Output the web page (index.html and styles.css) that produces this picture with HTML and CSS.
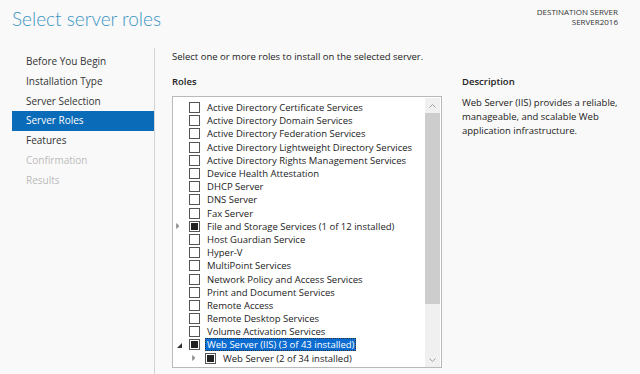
FILE: index.html
```html
<!DOCTYPE html>
<html lang="en">
<head>
  <meta charset="UTF-8" />
  <title>Add Roles and Features Wizard</title>
  <link rel="stylesheet" href="styles.css">
</head>
<body>

<header class="top">
  <h1>Select server roles</h1>
  <div class="dest">
    <div>DESTINATION SERVER</div>
    <div>SERVER2016</div>
  </div>
</header>

<div class="main">
  <nav class="steps">
    <a>Before You Begin</a>
    <a>Installation Type</a>
    <a>Server Selection</a>
    <a class="active">Server Roles</a>
    <a>Features</a>
    <a class="disabled">Confirmation</a>
    <a class="disabled">Results</a>
  </nav>

  <section class="content">
    <p class="intro">Select one or more roles to install on the selected server.</p>
    <div class="cols">
      <div>
        <h3>Roles</h3>
        <div class="listbox">
          <ul class="tree">
            <li><span class="exp"></span><span class="cb"></span><span class="lbl">Active Directory Certificate Services</span></li>
            <li><span class="exp"></span><span class="cb"></span><span class="lbl">Active Directory Domain Services</span></li>
            <li><span class="exp"></span><span class="cb"></span><span class="lbl">Active Directory Federation Services</span></li>
            <li><span class="exp"></span><span class="cb"></span><span class="lbl">Active Directory Lightweight Directory Services</span></li>
            <li><span class="exp"></span><span class="cb"></span><span class="lbl">Active Directory Rights Management Services</span></li>
            <li><span class="exp"></span><span class="cb"></span><span class="lbl">Device Health Attestation</span></li>
            <li><span class="exp"></span><span class="cb"></span><span class="lbl">DHCP Server</span></li>
            <li><span class="exp"></span><span class="cb"></span><span class="lbl">DNS Server</span></li>
            <li><span class="exp"></span><span class="cb"></span><span class="lbl">Fax Server</span></li>
            <li><span class="exp collapsed"></span><span class="cb partial"></span><span class="lbl">File and Storage Services (1 of 12 installed)</span></li>
            <li><span class="exp"></span><span class="cb"></span><span class="lbl">Host Guardian Service</span></li>
            <li><span class="exp"></span><span class="cb"></span><span class="lbl">Hyper-V</span></li>
            <li><span class="exp"></span><span class="cb"></span><span class="lbl">MultiPoint Services</span></li>
            <li><span class="exp"></span><span class="cb"></span><span class="lbl">Network Policy and Access Services</span></li>
            <li><span class="exp"></span><span class="cb"></span><span class="lbl">Print and Document Services</span></li>
            <li><span class="exp"></span><span class="cb"></span><span class="lbl">Remote Access</span></li>
            <li><span class="exp"></span><span class="cb"></span><span class="lbl">Remote Desktop Services</span></li>
            <li><span class="exp"></span><span class="cb"></span><span class="lbl">Volume Activation Services</span></li>
            <li><span class="exp expanded"></span><span class="cb partial"></span><span class="lbl selected">Web Server (IIS) (3 of 43 installed)</span></li>
            <li class="child"><span class="exp collapsed"></span><span class="cb partial"></span><span class="lbl">Web Server (2 of 34 installed)</span></li>
          </ul>
          <div class="scrollbar">
            <div class="arrow">
              <svg width="7" height="4" viewBox="0 0 7 4"><path d="M0.5 3.5 L3.5 0.5 L6.5 3.5" fill="none" stroke="#a0a0a0" stroke-width="1"/></svg>
            </div>
            <div class="track">
              <div class="thumb"></div>
            </div>
            <div class="arrow">
              <svg width="7" height="4" viewBox="0 0 7 4"><path d="M0.5 0.5 L3.5 3.5 L6.5 0.5" fill="none" stroke="#a0a0a0" stroke-width="1"/></svg>
            </div>
          </div>
        </div>
      </div>
      <div class="desc">
        <h3>Description</h3>
        <p>Web Server (IIS) provides a reliable, manageable, and scalable Web application infrastructure.</p>
      </div>
    </div>
  </section>
</div>

</body>
</html>
```

FILE: styles.css
```css
* {
  margin: 0;
  padding: 0;
  box-sizing: border-box;
}

body {
  font-family: 'Open Sans', 'Noto Sans', sans-serif;
  font-size: 9.5px;
  background-color: #f9f9f9;
  color: #222;
  height: 374px;
  overflow: hidden;
}

.top {
  display: flex;
  justify-content: space-between;
  height: 48px;
  padding: 0 22px 0 12px;
}

.top h1 {
  font-family: 'Lato', 'Open Sans', sans-serif;
  font-weight: 300;
  font-size: 19px;
  color: #3a94c4;
  padding-top: 7px;
}

.dest {
  text-align: right;
  font-size: 8px;
  line-height: 10px;
  padding-top: 7px;
  color: #333;
}

.main {
  display: flex;
}

.steps {
  width: 155px;
  padding: 4px 0 0 12px;
  border-right: 1px solid #d4d4d4;
  height: 326px;
  display: flex;
  flex-direction: column;
  font-size: 10px;
}

.steps a {
  display: block;
  height: 19.8px;
  line-height: 19.8px;
  padding-left: 14px;
  color: #333;
}

.steps a.active {
  background-color: #0a6bb8;
  color: #fff;
}

.steps a.disabled {
  color: #bbb;
}

.content {
  padding: 2px 0 0 17px;
}

.intro {
  line-height: 14px;
  color: #222;
}

.cols {
  display: flex;
  gap: 20px;
  margin-top: 11px;
}

h3 {
  font-size: 9.5px;
  font-weight: 600;
  line-height: 14px;
  margin-bottom: 7px;
}

.listbox {
  width: 270px;
  height: 272px;
  background: #fff;
  border: 1px solid #b9b9b9;
  display: flex;
}

.tree {
  flex: 1;
  list-style: none;
  padding-top: 4px;
}

.tree li {
  display: flex;
  align-items: center;
  height: 13.2px;
  white-space: nowrap;
}

.tree li.child {
  padding-left: 16px;
}

.exp {
  width: 16px;
  height: 11px;
  display: flex;
  align-items: center;
  justify-content: center;
  position: relative;
}

.exp.collapsed::before {
  content: "";
  border-left: 4px solid #999;
  border-top: 3.5px solid transparent;
  border-bottom: 3.5px solid transparent;
  margin-left: -6px;
}

.exp.collapsed::after {
  content: "";
  position: absolute;
  left: 6px;
  top: 3.5px;
  border-left: 2px solid #fff;
  border-top: 2px solid transparent;
  border-bottom: 2px solid transparent;
}

.exp.expanded::before {
  content: "";
  width: 0;
  height: 0;
  border-right: 5px solid #333;
  border-top: 5px solid transparent;
  margin-left: -4px;
  margin-top: 1px;
}

.cb {
  width: 11px;
  height: 11px;
  border: 1px solid #555;
  background: #fff;
  margin-right: 6px;
  display: flex;
  align-items: center;
  justify-content: center;
}

.cb.partial::before {
  content: "";
  width: 7px;
  height: 7px;
  background: #222;
}

.lbl {
  line-height: 11px;
  padding: 0 1px;
  margin-left: -1px;
  border: 1px dotted transparent;
}

.lbl.selected {
  background: #0a6bd1;
  color: #fff;
  border-color: #333;
}

.scrollbar {
  width: 15px;
  display: flex;
  flex-direction: column;
  background: #f0f0f0;
  margin: 1px 1px 0 0;
}

.arrow {
  height: 15px;
  display: flex;
  align-items: center;
  justify-content: center;
}

.track {
  flex: 1;
}

.thumb {
  height: 191px;
  background: #cdcdcd;
}

.desc {
  width: 165px;
}

.desc p {
  line-height: 14px;
  color: #222;
}
```
